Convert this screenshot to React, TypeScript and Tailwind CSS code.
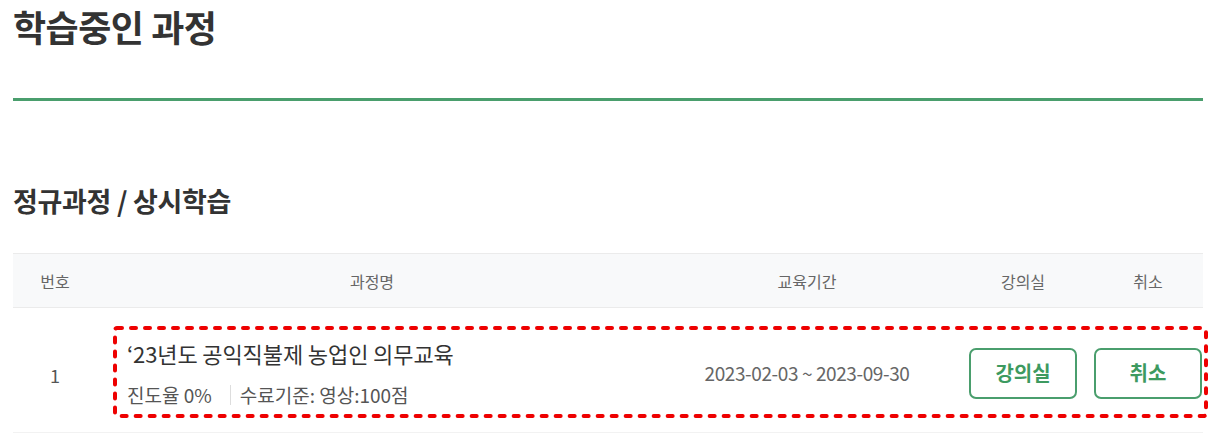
const font = { fontFamily: '"Noto Sans CJK KR", "Noto Sans", sans-serif' };

const course = {
  no: 1,
  title: '‘23년도 공익직불제 농업인 의무교육',
  progress: '0%',
  criteria: '영상:100점',
  period: '2023-02-03 ~ 2023-09-30',
};

function DashedMark() {
  return (
    <svg
      className="absolute left-[100px] top-[18px] pointer-events-none"
      width="1095"
      height="92"
      viewBox="0 0 1095 92">
      <rect
        x="2"
        y="2"
        width="1091"
        height="88"
        rx="2"
        fill="none"
        stroke="#ee0000"
        strokeWidth="4"
        strokeDasharray="5 9"
        strokeLinecap="round"
      />
    </svg>
  );
}

export default function App() {
  return (
    <div className="w-[1216px] h-[439px] bg-white overflow-hidden px-[13px]" style={font}>
      <h1 className="pt-[2px] text-[36px] leading-[48px] font-bold text-[#333] tracking-[-0.5px]">
        학습중인 과정
      </h1>
      <div className="mt-[48px] h-[3px] bg-[#4a9e6d]" />

      <h2 className="mt-[83px] text-[27px] leading-[34px] font-bold text-[#333] tracking-[-0.3px]">
        정규과정 / 상시학습
      </h2>

      <div className="mt-[35px]">
        <div className="grid grid-cols-[84px_550px_320px_112px_1fr] h-[55px] items-center bg-[#f8f9fa] border-y border-[#ebebeb] text-[16px] text-[#666]">
          <div className="text-center">번호</div>
          <div className="text-center">과정명</div>
          <div className="text-center">교육기간</div>
          <div className="text-center">강의실</div>
          <div className="text-center pl-[14px]">취소</div>
        </div>

        <div className="relative grid grid-cols-[84px_550px_320px_112px_1fr] h-[125px] items-center border-b border-[#f2f2f2]">
          <div className="text-center text-[18px] text-[#555] pt-[11px]">{course.no}</div>
          <div className="self-start pl-[30px] pt-[30px]">
            <p className="text-[22px] leading-[30px] text-[#333] tracking-[-0.1px]">{course.title}</p>
            <div className="mt-[14px] flex items-center text-[19px] leading-[26px] text-[#555]">
              <span>진도율 {course.progress}</span>
              <span className="ml-[18px] mr-[9px] h-[20px] w-px bg-[#ddd]" />
              <span>수료기준: {course.criteria}</span>
            </div>
          </div>
          <div className="text-center text-[19px] text-[#666] tracking-[-0.4px] pt-[7px]">{course.period}</div>
          <div className="flex justify-center pt-[6px]">
            <button className="w-[108px] h-[51px] rounded-[7px] border-2 border-[#4a9e6d] text-[20px] font-semibold text-[#3d9a60]">
              강의실
            </button>
          </div>
          <div className="flex justify-end pr-[1px] pt-[6px]">
            <button className="w-[108px] h-[51px] rounded-[7px] border-2 border-[#4a9e6d] text-[20px] font-semibold text-[#3d9a60]">
              취소
            </button>
          </div>
          <DashedMark />
        </div>
      </div>
    </div>
  );
}
